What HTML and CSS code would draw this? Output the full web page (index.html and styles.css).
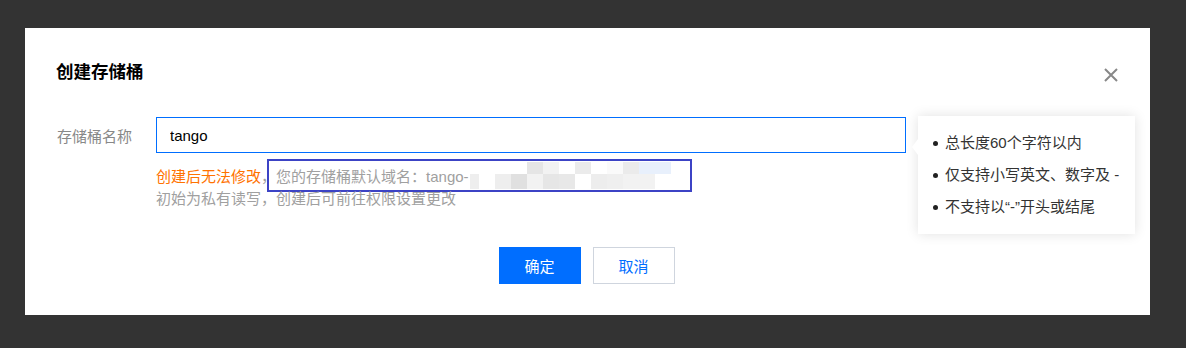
FILE: index.html
```html
<!DOCTYPE html>
<html>
<head>
<meta charset="UTF-8">
<title>创建存储桶</title>
<link rel="stylesheet" href="styles.css">
</head>
<body>
	<div class="dialog">
		<div class="dialog-hd">
			<h3 class="dialog-title">创建存储桶</h3>
			<a href="javascript:;" class="dialog-close">
				<svg width="16" height="16" viewBox="0 0 16 16"><path d="M2 2L14 14M14 2L2 14" stroke="#888" stroke-width="2" fill="none"/></svg>
			</a>
		</div>
		<div class="form-row">
			<label class="form-label">存储桶名称</label>
			<div class="form-ctrl">
				<input class="text-input" type="text" value="tango">
				<div class="bubble">
					<ul>
						<li>总长度60个字符以内</li>
						<li>仅支持小写英文、数字及 -</li>
						<li>不支持以“-”开头或结尾</li>
					</ul>
				</div>
			</div>
		</div>
		<div class="form-help">
			<div class="help-line">
				<span class="warn">创建后无法修改</span><span class="comma">，</span>
				<span class="domain">您的存储桶默认域名：tango-<span class="mosaic">
					<i></i><i></i><i></i><i></i><i class="ga"></i><i class="gb"></i><i></i><i class="gc"></i><i></i><i class="gd"></i><i class="gc"></i><i class="gblue"></i><i class="gblue"></i>
					<i class="ge"></i><i></i><i class="ge"></i><i class="gf"></i><i class="gb"></i><i class="gg"></i><i class="gh"></i><i></i><i class="gi"></i><i class="gj"></i><i class="gb"></i><i class="gb"></i><i></i>
				</span></span>
			</div>
			<div class="help-line">初始为私有读写，创建后可前往权限设置更改</div>
		</div>
		<div class="dialog-ft">
			<a href="javascript:;" class="btn btn-primary">确定</a>
			<a href="javascript:;" class="btn">取消</a>
		</div>
	</div>
</body>
</html>
```

FILE: styles.css
```css
* {
	margin: 0;
	padding: 0;
	box-sizing: border-box;
}

a {
	text-decoration: none;
}

body {
	background-color: #333;
	padding: 28px 0 0 25px;
	font-family: "Liberation Sans", "Noto Sans CJK SC", sans-serif;
	font-size: 15px;
}

.dialog {
	width: 1125px;
	height: 287px;
	background-color: #fff;
	padding: 33px 31px 0 31px;
}

.dialog-hd {
	display: flex;
	align-items: center;
	justify-content: space-between;
	height: 22px;
}

.dialog-title {
	font-size: 17.5px;
	font-weight: bold;
	color: #000;
	line-height: 22px;
}

.dialog-close {
	display: block;
	width: 16px;
	height: 16px;
	margin-top: 6px;
}

.dialog-close svg {
	display: block;
}

.form-row {
	display: flex;
	align-items: center;
	margin-top: 34px;
}

.form-label {
	width: 100px;
	color: #888;
	padding-left: 1px;
}

.form-ctrl {
	position: relative;
}

.text-input {
	display: block;
	width: 750px;
	height: 36px;
	border: 1px solid #006eff;
	padding-left: 13px;
	font-family: inherit;
	font-size: 15px;
	color: #000;
	outline: none;
}

.bubble {
	position: absolute;
	left: 762px;
	top: -1px;
	width: 217px;
	height: 118px;
	background-color: #fff;
	box-shadow: 0 0 12px rgba(0, 0, 0, 0.12);
	padding: 11px 12px 11px 15px;
	color: #333;
	font-size: 15px;
}

.bubble::before {
	content: "";
	position: absolute;
	left: -6px;
	top: 23px;
	border-top: 8px solid transparent;
	border-bottom: 8px solid transparent;
	border-right: 6px solid #fff;
}

.bubble ul {
	list-style: none;
}

.bubble li {
	line-height: 32px;
	white-space: nowrap;
	display: flex;
	align-items: center;
}

.bubble li::before {
	content: "";
	flex-shrink: 0;
	width: 5px;
	height: 5px;
	border-radius: 50%;
	background-color: #222;
	margin-right: 7px;
}

.form-help {
	margin: 11px 0 0 100px;
	color: #a0a0a0;
}

.help-line {
	display: flex;
	align-items: center;
	height: 22px;
	white-space: nowrap;
}

.warn {
	color: #ff7200;
}

.domain {
	display: flex;
	align-items: center;
	width: 425px;
	height: 33px;
	margin-left: -9px;
	border: 2px solid #3c43c5;
	padding-left: 7px;
	background-color: #fff;
}

.mosaic {
	display: grid;
	grid-template-columns: 9px repeat(12, 16px);
	grid-template-rows: 12px 15px;
	margin-left: 1px;
}

.mosaic i {
	display: block;
}

.mosaic .ga { background-color: #e5e5e5; }
.mosaic .gb { background-color: #f2f2f2; }
.mosaic .gc { background-color: #ebebeb; }
.mosaic .gd { background-color: #fafafa; }
.mosaic .ge { background-color: #eeeeee; }
.mosaic .gf { background-color: #e0e0e0; }
.mosaic .gg { background-color: #e6e6e6; }
.mosaic .gh { background-color: #e8e8e8; }
.mosaic .gi { background-color: #ededed; }
.mosaic .gj { background-color: #efefef; }
.mosaic .gblue { background-color: #e8f0fc; }

.dialog-ft {
	display: flex;
	justify-content: center;
	gap: 12px;
	margin-top: 39px;
	padding-right: 2px;
}

.btn {
	display: flex;
	align-items: center;
	justify-content: center;
	width: 82px;
	height: 37px;
	border: 1px solid #cfd5de;
	color: #006eff;
	background-color: #fff;
}

.btn-primary {
	background-color: #006eff;
	border-color: #006eff;
	color: #fff;
}
```
